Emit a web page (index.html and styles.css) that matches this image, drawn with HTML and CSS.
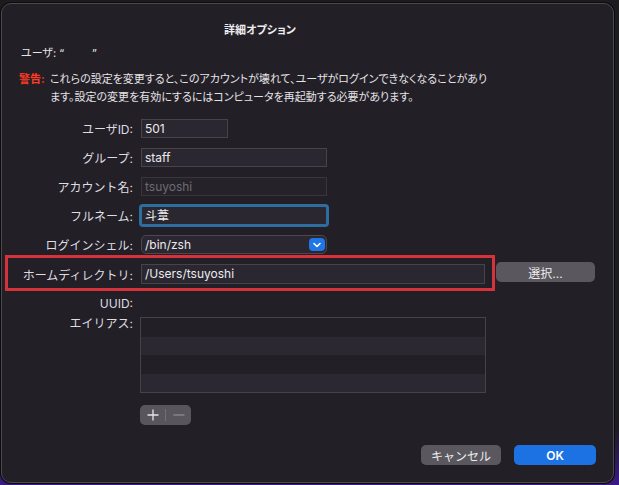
FILE: index.html
```html
<!DOCTYPE html>
<html lang="ja">
<head>
  <meta charset="UTF-8">
  <title>詳細オプション</title>
  <link rel="stylesheet" href="styles.css">
</head>
<body>
  <div class="sheet">
    <h1 class="sheet-title">詳細オプション</h1>
    <p class="user-line">ユーザ: <span class="quote">“</span><span class="user-name"></span><span class="quote">”</span></p>

    <div class="warning">
      <span class="warning-label">警告:</span>
      <p class="warning-text">これらの設定を変更すると、このアカウントが壊れて、ユーザがログインできなくなることがあり<br>ます。設定の変更を有効にするにはコンピュータを再起動する必要があります。</p>
    </div>

    <div class="form">
      <div class="form-row">
        <label class="form-label">ユーザID:</label>
        <div class="field field-short">501</div>
      </div>
      <div class="form-row">
        <label class="form-label">グループ:</label>
        <div class="field">staff</div>
      </div>
      <div class="form-row">
        <label class="form-label">アカウント名:</label>
        <div class="field field-disabled">tsuyoshi</div>
      </div>
      <div class="form-row">
        <label class="form-label">フルネーム:</label>
        <div class="field field-focus">斗葦</div>
      </div>
      <div class="form-row">
        <label class="form-label">ログインシェル:</label>
        <div class="field popup">
          <span>/bin/zsh</span>
          <span class="popup-arrow">
            <svg width="8" height="6" viewBox="0 0 8 6"><path d="M1 1.5 L4 4.5 L7 1.5" fill="none" stroke="#fff" stroke-width="1.6" stroke-linecap="round" stroke-linejoin="round"/></svg>
          </span>
        </div>
      </div>

      <div class="form-row home-row">
        <div class="highlight">
          <label class="form-label">ホームディレクトリ:</label>
          <div class="field field-home">/Users/tsuyoshi</div>
        </div>
        <button class="btn btn-gray btn-choose">選択...</button>
      </div>

      <div class="form-row uuid-row">
        <label class="form-label">UUID:</label>
      </div>

      <div class="form-row alias-row">
        <label class="form-label">エイリアス:</label>
        <div class="alias-list">
          <div class="alias-item"></div>
          <div class="alias-item"></div>
          <div class="alias-item"></div>
          <div class="alias-item"></div>
        </div>
      </div>

      <div class="plus-minus">
        <span class="pm-btn">
          <svg width="12" height="12" viewBox="0 0 12 12"><path d="M6 0.5 V11.5 M0.5 6 H11.5" stroke="#e6e5e8" stroke-width="1.3"/></svg>
        </span>
        <span class="pm-divider"></span>
        <span class="pm-btn">
          <svg width="12" height="12" viewBox="0 0 12 12"><path d="M0.5 6 H11.5" stroke="#8d8b91" stroke-width="1.3"/></svg>
        </span>
      </div>
    </div>

    <div class="actions">
      <button class="btn btn-gray btn-cancel">キャンセル</button>
      <button class="btn btn-blue btn-ok">OK</button>
    </div>
  </div>
</body>
</html>
```

FILE: styles.css
```css
body {
  margin: 0;
  height: 485px;
  overflow: hidden;
  background: linear-gradient(to bottom, #1c1b1e 0%, #1c1b1e 88%, #3a1a86 100%);
  font-family: Inter, "Noto Sans CJK JP", sans-serif;
  font-size: 12px;
  color: #e4e3e6;
}

.sheet {
  margin: 3px 0 0 1px;
  width: 613px;
  height: 480px;
  box-sizing: border-box;
  background-color: #231f27;
  border: 1px solid #4b4950;
  border-radius: 10px;
  box-shadow: 0 0 0 1px #0c0c0d;
  display: flex;
  flex-direction: column;
}

.sheet-title {
  margin: 18px 0 0;
  padding-right: 95px;
  font-size: 11px;
  font-weight: 700;
  font-feature-settings: "palt";
  line-height: 16px;
  text-align: center;
  color: #ececee;
}

.user-line {
  margin: 7px 0 0;
  padding-left: 19px;
  font-size: 11px;
  font-feature-settings: "palt";
  line-height: 16px;
}

.user-name {
  display: inline-block;
  width: 28px;
}

.warning {
  margin-top: 9px;
  padding-left: 17px;
  display: flex;
  font-size: 11px;
  font-feature-settings: "palt";
}

.warning-label {
  width: 31px;
  flex-shrink: 0;
  color: #ff3b21;
  font-weight: 700;
  line-height: 18px;
}

.warning-text {
  margin: 0;
  line-height: 18px;
}

.form {
  margin-top: 13px;
  display: flex;
  flex-direction: column;
}

.form-row {
  display: flex;
  align-items: center;
  gap: 8px;
  height: 19px;
  margin-top: 10px;
}

.form-row:first-child {
  margin-top: 0;
}

.form-label {
  width: 131px;
  flex-shrink: 0;
  text-align: right;
  color: #dedde1;
  white-space: nowrap;
}

.field {
  box-sizing: border-box;
  width: 186px;
  height: 19px;
  padding: 0 3px;
  line-height: 17px;
  background-color: #2a2730;
  border: 1px solid #46434b;
  color: #ecebee;
}

.field-short {
  width: 87px;
}

.field-disabled {
  background-color: #26222a;
  border-color: #38353d;
  color: #6f6c74;
}

.field-focus {
  border-color: #2d6da0;
  box-shadow: 0 0 0 2px #2d6da0;
  border-radius: 2px;
}

.popup {
  display: flex;
  align-items: center;
  justify-content: space-between;
  padding-right: 1px;
  border-radius: 5px;
  border-color: #4a474f;
}

.popup-arrow {
  width: 16px;
  height: 13px;
  border-radius: 4px;
  background-color: #1f76e6;
  display: flex;
  align-items: center;
  justify-content: center;
}

.home-row {
  height: 36px;
  margin-top: 1px;
  gap: 1px;
}

.highlight {
  box-sizing: border-box;
  height: 36px;
  margin-left: 3px;
  padding: 6px 7px 4px 0;
  border: 3px solid #d6323c;
  display: flex;
  align-items: center;
  gap: 8px;
}

.highlight .form-label {
  width: 125px;
}

.field-home {
  width: 344px;
  height: 20px;
  line-height: 18px;
}

.btn {
  border: none;
  border-radius: 5px;
  font-family: inherit;
  font-size: 12px;
  color: #ecebee;
  padding: 0;
  height: 20px;
  cursor: pointer;
}

.btn-gray {
  background-color: #5a585e;
}

.btn-blue {
  background-color: #1c72e2;
  color: #ffffff;
  font-weight: 600;
}

.btn-choose {
  width: 99px;
  margin-top: -2px;
}

.uuid-row {
  height: 14px;
  margin-top: 5px;
}

.alias-row {
  height: auto;
  margin-top: 7px;
  align-items: flex-start;
}

.alias-row .form-label {
  line-height: 14px;
}

.alias-list {
  box-sizing: border-box;
  width: 346px;
  height: 76px;
  margin-left: -1px;
  border: 1px solid #45424a;
  display: grid;
  grid-template-rows: repeat(4, 1fr);
}

.alias-item:nth-child(even) {
  background-color: #2c2832;
}

.plus-minus {
  margin: 12px 0 0 138px;
  width: 51px;
  height: 20px;
  border-radius: 5px;
  background-color: #58565c;
  display: flex;
  align-items: center;
}

.pm-btn {
  flex: 1;
  display: flex;
  align-items: center;
  justify-content: center;
}

.pm-divider {
  width: 1px;
  height: 12px;
  background-color: #727075;
}

.actions {
  margin-top: auto;
  padding: 0 17px 17px 0;
  display: flex;
  justify-content: flex-end;
  gap: 13px;
}

.btn-cancel {
  width: 80px;
}

.btn-ok {
  width: 82px;
}
```
